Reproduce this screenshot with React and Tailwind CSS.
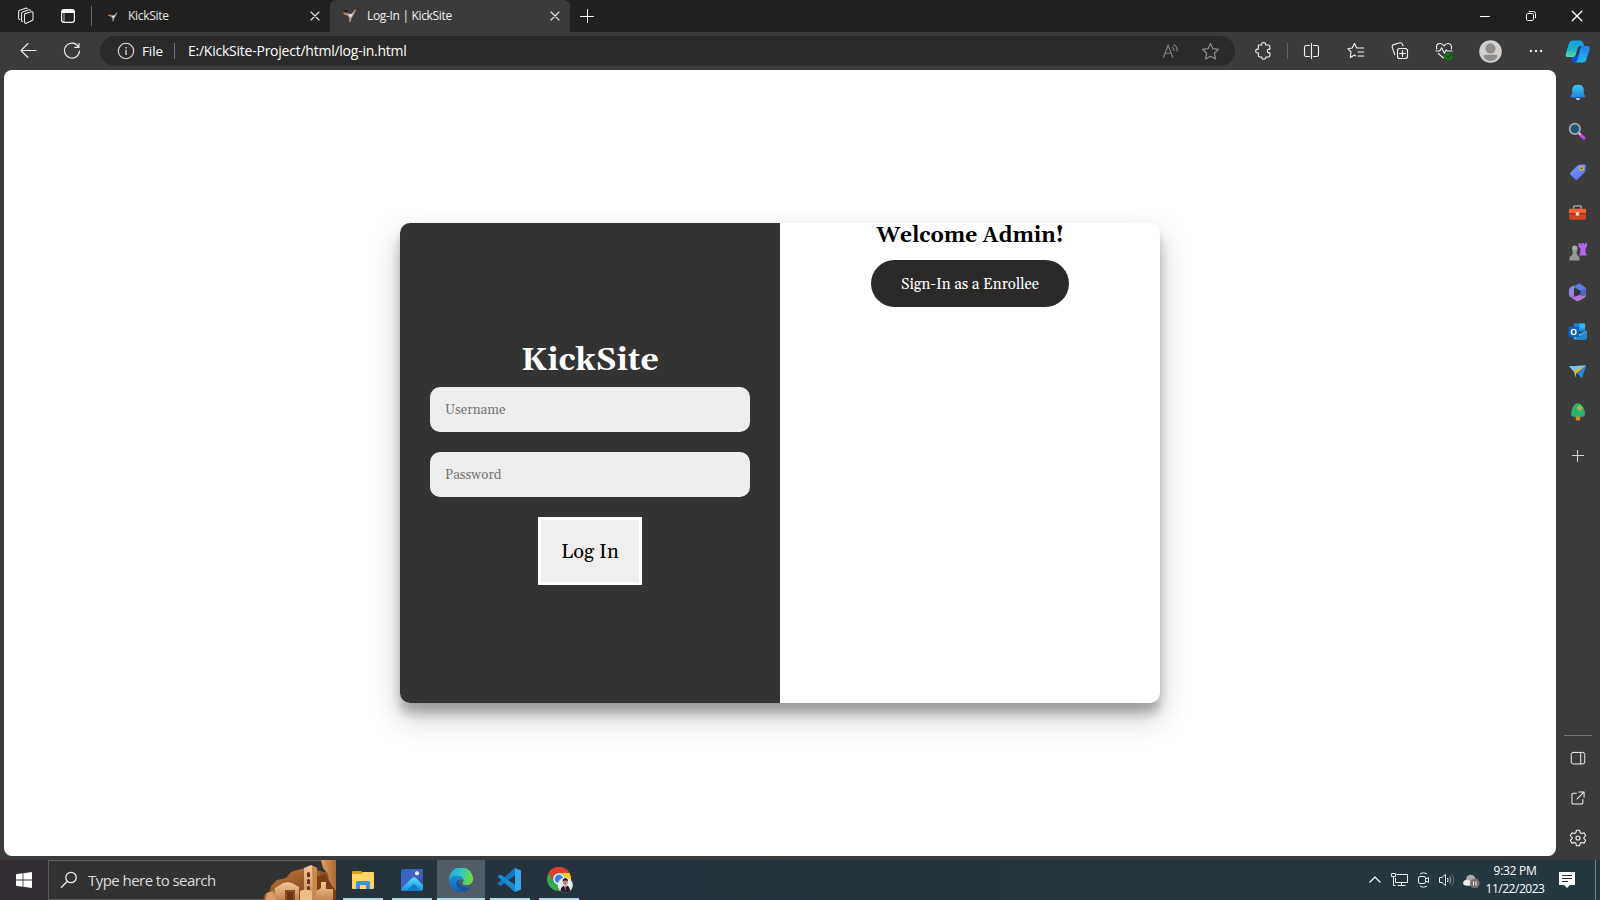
import React from "react";

const UI = "font-['Open_Sans','Noto_Sans',sans-serif]";
const SERIF = "font-['Gelasio','Liberation_Serif',serif]";

/* Outline icon drawn on a 20px grid */
function Line({ children, size = 20, color = "#f3f3f3", w = 1.1, className = "" }) {
  return (
    <svg width={size} height={size} viewBox="0 0 20 20" fill="none" stroke={color} strokeWidth={w} strokeLinecap="round" strokeLinejoin="round" className={"shrink-0 " + className}>
      {children}
    </svg>
  );
}

function Art({ children, size = 20, className = "" }) {
  return (
    <svg width={size} height={size} viewBox="0 0 20 20" className={"shrink-0 " + className}>
      {children}
    </svg>
  );
}

const STAR = "M10 2.4 12.3 7.3 17.6 8 13.7 11.7 14.7 17.1 10 14.5 5.3 17.1 6.3 11.7 2.4 8 7.7 7.3Z";

function Kicker({ size, className }) {
  return (
    <svg width={size} height={size} viewBox="0 0 14 14" className={"shrink-0 " + className}>
      <path d="M.5 4 5 4.6 8 5 12.5.8 13 1.6 9.8 7.2 8.4 9.5 7.6 13H6.4L6.2 9 4.6 6.5 1 5.2Z" fill="#aaa4a2" />
      <path d="M1.4 1.2 4.2 1.6 5.5 4.1 3.2 4.5Z" fill="#171313" />
      <path d="M.4 4.2 3.2 4.5M3.6 3.4 5 5M10.6 2.8 12.8.8M6.4 11 7.2 13" stroke="#d5734a" strokeWidth="1.3" />
      <path d="M5.6 5.6 9.8 5 7.6 8.8Z" fill="#ece9e8" />
    </svg>
  );
}

const Close = ({ color = "#e6e6e6", size = 10 }) => (
  <svg width={size} height={size} viewBox="0 0 10 10" stroke={color} strokeWidth="1.1" strokeLinecap="round">
    <path d="M1 1 9 9M9 1 1 9" />
  </svg>
);

function TitleBar() {
  return (
    <header className="flex h-8 shrink-0 items-center bg-[#202020]">
      <div className="flex w-[52px] justify-center">
        <svg width="18" height="18" viewBox="0 0 18 18" fill="none" stroke="#e8e8e8" strokeWidth="1.1" strokeLinejoin="round" strokeLinecap="round">
          <path d="M8 6.6 14.6 4.8Q16 4.5 16 6V12.2Q16 13.2 15 13.6L9.3 16.2Q8 16.7 7.5 15.4V7.8Q7.5 6.8 8.4 6.6ZM5.6 14.6Q4.5 14.4 4.5 13V6.5Q4.5 5.3 5.6 4.9L12 2.8Q13 2.6 13.4 3.2M2.8 12.6Q1.6 12.2 1.6 11V4.9Q1.6 3.7 2.7 3.3L8.6 1.2Q9.6.9 10.2 1.5" />
        </svg>
      </div>
      <div className="flex w-8 justify-center">
        <svg width="14" height="14" viewBox="0 0 14 14" fill="none" stroke="#f5f5f5">
          <rect x=".6" y=".6" width="12.8" height="12.8" rx="2.3" strokeWidth="1.2" />
          <path d="M1 2.5H13" strokeWidth="3" />
          <path d="M3 4V13" strokeWidth=".9" opacity=".75" />
        </svg>
      </div>
      <div className="ml-[7px] h-5 w-px bg-[#696969]" />
      <div className="flex h-8 w-[238px] items-center pl-[16px] pr-[10px]">
        <Kicker size={10} className="mr-[10px] mt-px" />
        <span className="flex-1 text-[12px] leading-none tracking-[-0.3px] text-[#e8e8e8]">KickSite</span>
        <Close />
      </div>
      <div className="flex h-8 w-[240px] items-center rounded-t-md bg-[#3b3b3b] pl-[13px] pr-[10px]">
        <Kicker size={14} className="mr-[10px]" />
        <span className="flex-1 text-[12px] leading-none tracking-[-0.33px] text-[#f2f2f2]">Log-In | KickSite</span>
        <Close />
      </div>
      <svg width="14" height="14" viewBox="0 0 14 14" className="ml-[10px]" stroke="#f5f5f5" strokeWidth="1"><path d="M7.5 0V14M0 7.5H14" /></svg>
      <div className="ml-auto flex">
        <div className="grid h-8 w-[46px] place-items-center">
          <svg width="10" height="10" viewBox="0 0 10 10" stroke="#fff"><path d="M0 5.5H10" /></svg>
        </div>
        <div className="grid h-8 w-[46px] place-items-center">
          <svg width="10" height="10" viewBox="0 0 10 10" fill="none" stroke="#fff"><rect x=".5" y="2.5" width="7" height="7" rx="1.2" /><path d="M2.7.5H7.4Q9.5.5 9.5 2.6V7.2" /></svg>
        </div>
        <div className="grid h-8 w-[46px] place-items-center"><Close color="#fff" size={12} /></div>
      </div>
    </header>
  );
}

const Tool = ({ children, className = "w-11" }) => <div className={"flex h-9 shrink-0 items-center justify-center " + className}>{children}</div>;

function Toolbar() {
  return (
    <div className="flex h-[38px] shrink-0 items-center bg-[#3b3b3b]">
      <div className="flex w-14 justify-center">
        <svg width="17" height="16" viewBox="0 0 17 16" fill="none" stroke="#ececec" strokeWidth="1.1" strokeLinecap="round" strokeLinejoin="round"><path d="M16 7.5H1M8 .5 1 7.5 8 14.5" /></svg>
      </div>
      <div className="flex w-8 justify-center">
        <svg width="18" height="18" viewBox="0 0 18 18" fill="none" stroke="#ececec" strokeWidth="1.1" strokeLinecap="round" strokeLinejoin="round"><path d="M15.7 5.2A7.5 7.5 0 1 0 16.5 9M16 1.2V5.4H11.8" /></svg>
      </div>
      <div className="ml-3 flex h-[30px] w-[1135px] items-center rounded-full bg-[#2b2b2b] pl-[17px] pr-[14px]">
        <svg width="18" height="18" viewBox="0 0 18 18" fill="none" stroke="#e0e0e0" strokeWidth="1.1"><circle cx="9" cy="9" r="7.7" /><path d="M9 7.8V13" strokeWidth="1.3" /><path d="M9 5V6.4" strokeWidth="1.3" /></svg>
        <span className="ml-[7px] w-[32px] whitespace-nowrap pt-px text-[13.5px] leading-none tracking-[-0.1px] text-white">File</span>
        <div className="h-4 w-px bg-[#747474]" />
        <span className="ml-[13px] flex-1 whitespace-nowrap text-[14px] leading-none tracking-[-0.24px] text-white">E:/KickSite-Project/html/log-in.html</span>
        <svg width="18" height="16" viewBox="0 0 18 16" fill="none" stroke="#858585" strokeWidth="1.1" strokeLinecap="round" className="mr-[20px]"><path d="M1.5 14.3 6.1 2.2 10.7 14.3M3 10.3H9.2M10.4 4.1Q12.1 5.2 11.9 7.5M12 1.8Q15.5 3.8 15 8" /></svg>
        <Line size={21} color="#929292" w={1.1}><path d={STAR} /></Line>
      </div>
      <Tool className="ml-1.5 w-11">
        <Line size={20}><path d="M4.2 4H7.5Q7.1 1.5 9.4 1.5T11.4 4H14.2Q15.7 4 15.7 5.5V8.2Q13.2 7.9 13.2 10T15.7 11.9V14.5Q15.7 16 14.2 16H11.6Q11.8 18.3 9.6 18.3T7.6 16H5.5Q4.1 16 4.1 14.5V11.9Q1.5 12.2 1.5 10T4.1 8.2Z" transform="translate(1.2 0)" /></Line>
      </Tool>
      <div className="ml-0.5 h-4 w-px bg-[#626262]" />
      <Tool className="ml-0.5 w-11">
        <Line size={20}><path d="M7.5 4.5H4.3Q2.5 4.5 2.5 6.3V13.7Q2.5 15.5 4.3 15.5H7.5M11.5 4.5H14.7Q16.5 4.5 16.5 6.3V13.7Q16.5 15.5 14.7 15.5H11.5M9.5 2.5V17.5" /></Line>
      </Tool>
      <Tool><Line size={20}><path d="M13 7H10.7L8.5 2.5 6.2 7 1.8 7.7 5 11 4.3 16.5 8.5 14 9.5 14.8M13 7H17.8M12 11H17.8M12 15H17.8M8.5 2.5 10.7 7" /></Line></Tool>
      <Tool><Line size={20}><rect x="7.5" y="7.5" width="10" height="10" rx="2.3" /><path d="M12.5 9.5V15.5M9.5 12.5H15.5M4.8 13.7 2.3 6.6Q1.6 4.4 3.8 3.6L9.7 1.8Q11.6 1.3 12.4 3.2L13 4.8" /></Line></Tool>
      <Tool>
        <Line size={20}><path d="M2.7 8Q1.5 3 5.6 2.5 8.2 2.2 10 4.8 12 2.2 14.5 2.5 18.5 3.2 17.3 8M2 10H5.8L7.6 6.8 10.4 12.2 12.3 8.8 13.3 10H18M4.3 12.5 9.5 17" /><circle cx="14.5" cy="15.4" r="3.2" fill="#107c10" stroke="#107c10" /><path d="M12.9 15.5 14.1 16.6 16.2 14.2" stroke="#064c06" /></Line>
      </Tool>
      <Tool className="w-12">
        <svg width="23" height="23" viewBox="0 0 23 23"><circle cx="11.5" cy="11.5" r="11.3" fill="#d2d0ce" /><circle cx="11.5" cy="8.6" r="5" fill="#8f8c8a" /><path d="M4.5 16.5Q4.5 14.8 6.2 14.8H16.8Q18.5 14.8 18.5 16.5 16 21 11.5 21T4.5 16.5Z" fill="#8f8c8a" /></svg>
      </Tool>
      <Tool><svg width="14" height="4" viewBox="0 0 14 4" fill="#f0f0f0"><circle cx="1.9" cy="2" r="1.2" /><circle cx="7" cy="2" r="1.2" /><circle cx="12.1" cy="2" r="1.2" /></svg></Tool>
      <Tool className="w-[42px] pr-[3px]">
        <svg width="25" height="23" viewBox="0 0 25 23">
          <defs>
            <linearGradient id="cp1" x1="0" y1="0" x2="0" y2="1"><stop stopColor="#169fe0" /><stop offset=".55" stopColor="#1eb5cb" /><stop offset="1" stopColor="#59dc94" /></linearGradient>
            <linearGradient id="cp2" x1="0" y1="0" x2="0" y2="1"><stop stopColor="#2280e8" /><stop offset="1" stopColor="#20baf4" /></linearGradient>
          </defs>
          <path d="M5.5 16H11L14 10 16 5.5H19L13 22.5H9.5Q7 22 6.5 19Z" fill="#174cda" />
          <path d="M7.7.5H15Q18 .5 18.4 4L19 6H15.7Q13.4 6 12.6 9L10.8 15Q10.2 17 7.8 17H2.5Q0 17 .8 14L4 3.2Q5 .5 7.7.5Z" fill="url(#cp1)" />
          <path d="M16.8 6H22Q25.2 6 24.6 9L21.4 19.5Q20.6 22.5 17.5 22.5H9.8Q12 22.3 12.8 19.2L15.3 9Q15.8 6.2 18 6Z" fill="url(#cp2)" />
          <path d="M13 7.4 16 6 12.6 16 10.4 16.5Z" fill="#303a49" />
        </svg>
      </Tool>
    </div>
  );
}

const SIDE_ICONS = [
  <Art key="bell" size={18}><path d="M3.5 8Q3.5 2 10 2T16.5 8V12L18 14.5Q18.3 16 17 16H3Q1.7 16 2 14.5L3.5 12Z" fill="url(#bell)" /><path d="M7.5 17H12.5Q12 19.2 10 19.2T7.5 17Z" fill="#d4d4d4" /></Art>,
  <Art key="search" size={18} className="-mt-0.5 mr-px"><path d="M13.5 14 17.5 17.7" stroke="#c04be8" strokeWidth="3.6" strokeLinecap="round" /><path d="M11.5 11.5 14 14" stroke="#ddd" strokeWidth="2" /><circle cx="7.6" cy="7.6" r="5.8" fill="#1f5776" stroke="#aaa8a5" strokeWidth="2" /></Art>,
  <Art key="tag" size={18}><path d="M10 2.3 16.5 1.5Q18.8 1.5 18.7 4L18 10 9.5 18.4Q8.3 19.4 7 18.3L1.7 13Q.6 11.8 1.8 10.5Z" fill="url(#tag)" /><circle cx="14" cy="6" r="2" fill="#38457a" stroke="#f2c319" strokeWidth="1.5" /></Art>,
  <Art key="toolbox" size={19}><path d="M6 6V4.2Q6 3 7.2 3H12.8Q14 3 14 4.2V6" fill="none" stroke="#aaa" strokeWidth="1.5" /><path d="M1 7.4Q1 6 2.5 6H17.5Q19 6 19 7.4V11H1Z" fill="#f06437" /><path d="M1.3 11H18.7V16Q18.7 17.5 17.2 17.5H2.8Q1.3 17.5 1.3 16Z" fill="#d44420" /><path d="M1 11.2H19" stroke="#8e2812" /><circle cx="10" cy="11.5" r="2" fill="#ddd" /></Art>,
  <Art key="chess" size={20}><path d="M10.5 1H12.4V2.6H13.7V1H15.8V2.6H17.2V1H19V5L17.5 6V10.5L19 13.6H10.8L12.3 10.5V6L10.5 5Z" fill="#b764f4" /><circle cx="6.8" cy="6.3" r="2.7" fill="#aaa" /><path d="M4.2 8.5H9.4V10H8.5Q8.7 13.3 11.5 15V18.5H1.5V15Q4.8 13.3 5 10H4.2Z" fill="#969696" /></Art>,
  <Art key="m365" size={19}><path d="M10 1Q12 0 14 1.6L18 4.5Q19 5.3 19 7V12L12.4 7.8 8.5 5.5Q7 5 5.2 6.5Z" fill="#557fe8" /><path d="M9.6 1.1Q6 3 6.3 7V13.5L3.4 15.2Q1 14.4 1 12V7.5Q1 5.3 3 4.2Z" fill="#9187dc" /><path d="M3.4 15.2 12.8 10.4 19 8.3V12.3Q19 14.5 17 15.7L11.7 18.8Q9.8 19.7 8 18.5Z" fill="#b974d8" /><path d="M13.2 7.8 19 5.8V13L13.2 14Z" fill="#4b66c3" /><path d="M6.8 6.2 13.2 7.8V12L6.8 14.5Z" fill="#38343c" /></Art>,
  <Art key="outlook" size={19} className="-mt-px"><path d="M6 1.5H17Q18 1.5 18 2.5V10H6Z" fill="#1689d8" /><path d="M12 1.5H18V7H12Z" fill="#35b4ed" /><path d="M6 9 12.5 13 19.5 9V17Q19.5 18.5 18 18.5H7.5Q6 18.5 6 17Z" fill="#55c8f2" /><path d="M6.2 18.2 19.5 10V17Q19.5 18.5 18 18.5Z" fill="#1e83d2" /><rect x=".5" y="5" width="11" height="11" rx="1.3" fill="#0b64bc" /><ellipse cx="6" cy="10.5" rx="2.4" ry="2.7" fill="none" stroke="#fff" strokeWidth="1.5" /></Art>,
  <Art key="plane" size={19} className="-mt-px"><path d="M1 4.5 19 3.7 14.5 16.8 9.4 11.4Z" fill="#3198ed" /><path d="M1 4.5 19 3.7 6 10Z" fill="#73c7f6" /><path d="M6 9.3 19 3.7 8.6 12 8.2 16.5Z" fill="#eeb529" /><path d="M9.4 11.4 19 3.7 14.5 16.8Z" fill="#2784df" /></Art>,
  <Art key="tree" size={20}><path d="M7.7 13H12.2V17.3Q12.2 18.4 11 18.4H9Q7.7 18.4 7.7 17.3Z" fill="#e58a23" /><path d="M10 1.3Q15 1.3 16.5 8.8 18 14 14.8 14.7H5.2Q2 14 3.5 8.8 5 1.3 10 1.3Z" fill="#29b46c" /><path d="M11.6 2.9 12.8 5 14.8 6 12.8 7 11.6 9.1 10.4 7 8.4 6 10.4 5Z" fill="#f7c634" /><circle cx="11.6" cy="6" r=".9" fill="#c66f14" /></Art>,
];

function SideBar() {
  return (
    <aside className="flex w-11 shrink-0 flex-col items-center bg-[#3b3b3b] pt-[2px]">
      <svg width="0" height="0" className="absolute">
        <defs>
          <linearGradient id="bell" x1="0" y1="0" x2="0" y2="1"><stop stopColor="#3cc6f0" /><stop offset="1" stopColor="#1b84e0" /></linearGradient>
          <linearGradient id="tag" x1="0" y1="0" x2="1" y2="1"><stop stopColor="#72a8fb" /><stop offset="1" stopColor="#5c62ee" /></linearGradient>
        </defs>
      </svg>
      {SIDE_ICONS.map((icon, i) => (
        <div key={i} className="flex h-10 w-11 items-center justify-center pr-px">{icon}</div>
      ))}
      <div className="mt-1 flex h-10 items-center">
        <svg width="12" height="12" viewBox="0 0 12 12" stroke="#d8d8d8"><path d="M5.5 0V12M0 5.5H12" /></svg>
      </div>
      <div className="mt-auto h-px w-7 bg-[#757575]" />
      <div className="mt-[2px] flex h-10 items-center"><Line size={18}><rect x="2.5" y="3.8" width="15" height="12.8" rx="2.2" /><path d="M13 4V16.5" /></Line></div>
      <div className="flex h-10 items-center"><Line size={16} w={1.3}><path d="M8 4H4.5Q2.4 4 2.4 6.1V15.5Q2.4 17.6 4.5 17.6H14Q16.1 17.6 16.1 15.5V12M11 2.4H17.6V9M17.4 2.6 8.7 11.3" /></Line></div>
      <div className="mb-[2px] flex h-10 items-center"><Line size={18} w={1.2}><circle cx="10" cy="10" r="2.3" /><path d="M8.3 1.4H11.7L12.4 4.1 14.1 5.1 16.8 4.3 18.6 7.4 16.6 9.2V10.8L18.6 12.6 16.8 15.7 14.1 14.9 12.4 15.9 11.7 18.6H8.3L7.6 15.9 5.9 14.9 3.2 15.7 1.4 12.6 3.4 10.8V9.2L1.4 7.4 3.2 4.3 5.9 5.1 7.6 4.1Z" /></Line></div>
    </aside>
  );
}

function LoginCard() {
  return (
    <main className={"flex h-[480px] w-[760px] overflow-hidden rounded-[10px] bg-white shadow-[0_14px_28px_rgba(0,0,0,0.25),0_10px_10px_rgba(0,0,0,0.22)] " + SERIF}>
      <form className="flex w-[380px] flex-col items-center bg-[#333333] px-[30px] pt-[119px]">
        <h1 className="h-[45px] whitespace-nowrap text-[32px] font-bold leading-[38px] text-white">KickSite</h1>
        <input placeholder="Username" className="h-[45px] w-80 rounded-[10px] bg-[#eeeeee] px-[15px] pt-[2px] text-[13.333px] placeholder:text-[#757575]" />
        <input placeholder="Password" className="mt-5 h-[45px] w-80 rounded-[10px] bg-[#eeeeee] px-[15px] pt-[2px] text-[13.333px] placeholder:text-[#757575]" />
        <button type="button" className="mt-5 h-[68px] w-[104px] whitespace-nowrap border-3 border-white bg-[#efefef] pt-px text-[20px] text-black">Log In</button>
      </form>
      <section className="flex w-[380px] flex-col items-center">
        <h2 className="h-[37px] whitespace-nowrap pt-px text-[21px] font-bold leading-[24px] text-black">Welcome Admin!</h2>
        <button type="button" className="h-[47px] w-[198px] whitespace-nowrap rounded-full bg-[#2c2a29] pt-[4px] text-[15px] text-white">Sign-In as a Enrollee</button>
      </section>
    </main>
  );
}

const AppSlot = ({ children, active }) => (
  <div className={"flex h-10 w-12 flex-col items-center " + (active ? "bg-[#505c66]" : "")}>
    <div className="flex h-[38px] items-center pt-[2px]">{children}</div>
    <div className={"h-[2px] bg-[#a6dcf8] " + (active ? "w-12" : "w-10")} />
  </div>
);

function SearchArt() {
  return (
    <svg width="73" height="40" viewBox="0 0 73 40" className="shrink-0">
      <defs>
        <linearGradient id="rock" x1="0" y1="0" x2="1" y2="1"><stop stopColor="#c5803f" /><stop offset="1" stopColor="#6b2f10" /></linearGradient>
        <linearGradient id="sand" x1="0" y1="0" x2="0" y2="1"><stop stopColor="#f3c998" /><stop offset="1" stopColor="#c58350" /></linearGradient>
        <linearGradient id="cliff" x1="0" y1="0" x2="1" y2="0"><stop stopColor="#e0a263" /><stop offset="1" stopColor="#ad682e" /></linearGradient>
      </defs>
      <path d="M0 40 2 34 7 31 8 26 14 20 23 18 28 12 38 9 46 7 60 12 73 13V40Z" fill="url(#rock)" />
      <path d="M58 0H73V31L66 23 65 14 60 8Z" fill="url(#cliff)" />
      <path d="M52 18 62 14 68 24 73 32V40H52Z" fill="#7c3d16" />
      <path d="M41 8 48 5 54 8V40H41Z" fill="url(#sand)" />
      <path d="M49 6 54 8V40H50Z" fill="#c9894e" />
      <path d="M44 13Q45.5 11 47 13V17H44ZM44 20Q45.5 18 47 20V24H44ZM44 27Q45.5 25 47 27V30H44Z" fill="#6f3415" />
      <path d="M12 28 17 25Q22 21 29 23L36 27V40H11Z" fill="url(#sand)" />
      <path d="M22 30H32V40H22Z" fill="#8b4b20" /><path d="M24 32H30V40H24Z" fill="#6d3514" />
      <path d="M37 31Q43 28 49 31V40H37Z" fill="#efbd88" />
      <path d="M58 22H63V29H70V40H53V31L58 28Z" fill="url(#sand)" />
      <path d="M2 40 4 33 10 31 13 40Z" fill="#d99a63" />
    </svg>
  );
}

function TaskBar() {
  return (
    <footer className="flex h-10 shrink-0 bg-gradient-to-r from-[#342e34] from-0% via-[#24333d] via-25% to-[#25373f]">
      <div className="grid w-12 place-items-center">
        <svg width="16" height="16" viewBox="0 0 16 16" fill="#fff"><path d="M0 2.2 6.6 1.3V7.5H0ZM7.4 1.2 16 0V7.5H7.4ZM0 8.4H6.6V14.7L0 13.8ZM7.4 8.4H16V16L7.4 14.8Z" /></svg>
      </div>
      <div className="flex w-72 items-center border border-r-0 border-[#5d5d5d] bg-[#323232] pl-[11px]">
        <svg width="18" height="18" viewBox="0 0 18 18" fill="none" stroke="#eee" strokeWidth="1.3"><circle cx="11" cy="6.5" r="5.2" /><path d="M7.3 10.2 1 16.8" /></svg>
        <span className="ml-[10px] flex-1 whitespace-nowrap text-[15px] leading-none tracking-[-0.55px] text-[#dcdcdc]">Type here to search</span>
        <SearchArt />
      </div>
      <div className="ml-[3px] flex gap-px">
        <AppSlot>
          <svg width="22" height="19" viewBox="0 0 22 19"><path d="M0 1Q0 0 1 0H9L11 2V4H0Z" fill="#e3a008" /><path d="M0 3H9L11 1H21Q22 1 22 2V17Q22 18 21 18H1Q0 18 0 17Z" fill="#ffd768" /><path d="M4 11.5Q4 10 5.5 10H16.5Q18 10 18 11.5V18H14V14H8V18H4Z" fill="#3a92d8" /></svg>
        </AppSlot>
        <AppSlot>
          <svg width="22" height="22" viewBox="0 0 22 22">
            <defs><linearGradient id="ph" x1="0" y1="0" x2="1" y2="1"><stop stopColor="#216ac1" /><stop offset=".5" stopColor="#4d5fc4" /><stop offset="1" stopColor="#164ca1" /></linearGradient><linearGradient id="mt" x1="0" y1="0" x2="0" y2="1"><stop stopColor="#5ce0ff" /><stop offset="1" stopColor="#168bd9" /></linearGradient></defs>
            <rect width="22" height="22" rx="2" fill="url(#ph)" /><path d="M0 20 11 9Q13 7.5 15 9L22 16V20Q22 22 20 22H2Q0 22 0 20Z" fill="url(#mt)" /><path d="M5 22 12 15.5Q13 14.7 14 15.5L20 22Z" fill="#1379c8" /><circle cx="16" cy="4.3" r="2" fill="#fff" />
          </svg>
        </AppSlot>
        <AppSlot active>
          <svg width="24" height="24" viewBox="0 0 24 24">
            <defs><linearGradient id="eg" x1="0" y1="0" x2="1" y2=".25"><stop stopColor="#249fd9" /><stop offset=".55" stopColor="#34c6c3" /><stop offset="1" stopColor="#64dc4a" /></linearGradient><linearGradient id="eb" x1="0" y1="0" x2="0" y2="1"><stop stopColor="#1b91d8" /><stop offset="1" stopColor="#165bb8" /></linearGradient></defs>
            <path d="M0 11.5A12 12 0 0 1 24 11C24 15 21 17 17.5 17 14 17 13 15.7 14 14.4 15.5 12.5 14.3 8.5 9.5 8.5 4.5 8.5.5 11 0 14Z" fill="url(#eg)" />
            <path d="M0 12.8C.2 9.5 4 7.5 8.5 7.7 13 8 14.5 10.5 14.2 12.5 11 10.5 8.2 13.5 9 17.5 10 22 15 24 18.5 22.3A12 12 0 0 1 0 12.8Z" fill="url(#eb)" />
            <path d="M9 11.8C6.5 14 7 20 12.5 22.5 16 24 21 22 22.7 18.5 20.5 19.8 16.5 20.2 13 18 9.5 16 9 13.5 10.5 11.3Z" fill="#15549f" />
          </svg>
        </AppSlot>
        <AppSlot>
          <svg width="24" height="24" viewBox="0 0 24 24" className="mr-0.5"><path d="M17 .5 18.5 0V7L3.5 18 .5 15.5Z" fill="#1278bf" /><path d="M.5 8.5 3.5 6.5 18.5 17V24L17 23.5Z" fill="#198bd2" /><path d="M18 0 24 2.5V21.5L18 24Z" fill="#32a9f2" /></svg>
        </AppSlot>
        <AppSlot>
          <svg width="26" height="26" viewBox="0 0 26 26" className="ml-0.5">
            <circle cx="12" cy="12" r="12" fill="#34a853" /><path d="M1.6 6A12 12 0 0 1 22.4 6H12A6 6 0 0 0 6.8 15Z" fill="#e33b2e" /><path d="M22.4 6A12 12 0 0 1 12 24L17.2 15A6 6 0 0 0 12 6Z" fill="#fbc71a" /><circle cx="12" cy="12" r="5.7" fill="#fff" /><circle cx="12" cy="12" r="4.4" fill="#397fe8" />
            <circle cx="18.3" cy="18" r="7.6" fill="#e9e9e9" /><path d="M13.5 23.8Q14 18.8 18.3 18.5T23.2 23.7Q18.3 27.5 13.5 23.8Z" fill="#1b1e30" /><path d="M16.8 18.5H19.8L18.4 22Z" fill="#fff" /><path d="M18.3 19V24" stroke="#b33" /><ellipse cx="18.3" cy="15.3" rx="2.3" ry="3" fill="#bd8771" /><path d="M15.7 15Q15.2 11.4 18.3 11.2T20.9 15L20 13.6H16.7Z" fill="#171313" />
          </svg>
        </AppSlot>
      </div>
      <div className="ml-auto flex items-center">
        <div className="flex w-6 justify-center"><svg width="12" height="8" viewBox="0 0 12 8" fill="none" stroke="#fff" strokeWidth="1.2"><path d="M.5 6.5 6 1 11.5 6.5" /></svg></div>
        <div className="flex w-6 justify-center"><svg width="17" height="14" viewBox="0 0 17 14" fill="none" stroke="#eee"><path d="M5.5 1.5H16.5V9.5H4.5V5M10.5 9.5V12.5M6.5 12.5H14.5M.5 1.5V.5H4.5V3.5H.5ZM2.5 4V12.5H4.5" /></svg></div>
        <div className="flex w-6 justify-center pl-px"><svg width="12" height="16" viewBox="0 0 12 16" fill="none" stroke="#eee"><rect x=".5" y="4.5" width="7" height="7" rx="1.5" /><path d="M7.5 7 10.5 5.5V10.5L7.5 9M2 1.8Q5.5-.4 9 1.8M2 14.2Q5.5 16.4 9 14.2" /></svg></div>
        <div className="flex w-6 justify-center"><svg width="17" height="14" viewBox="0 0 17 14" fill="none" stroke="#eee"><path d="M.5 4.5H3L6.5 1.3V12.7L3 9.5H.5Z" /><path d="M8.5 5Q9.7 7 8.5 9" /><path d="M10.7 3.3Q13 7 10.7 10.7" stroke="#aaa" /><path d="M13 1.5Q16.5 7 13 12.5" stroke="#6f7b80" /></svg></div>
        <div className="flex w-6 justify-center pt-0.5"><svg width="17" height="15" viewBox="0 0 17 15"><path d="M3.5 11.5Q0 11.3.2 8.5.5 6 3 5.7 3.5 1 7.5.8 11.5.8 12.3 4.5 15.5 5 15.5 8L10 11.5Z" fill="#a9abab" /><path d="M0 9Q2 5 5 6L10 8.5V11.5H3.5Q.5 11.5 0 9Z" fill="#ececec" /><circle cx="11.8" cy="9.5" r="4.8" fill="#766f6d" /><path d="M10.5 7.5V11.5M13 7.5V11.5" stroke="#fff" /></svg></div>
        <div className="flex w-[63px] flex-col items-center pl-px text-[12px] leading-[18px] tracking-[-0.48px] text-white">
          <span className="whitespace-nowrap tracking-[-0.3px]">9:32 PM</span>
          <span className="whitespace-nowrap">11/22/2023</span>
        </div>
        <svg width="16" height="16" viewBox="0 0 16 16" className="ml-[13px]"><path d="M0 0H16V13H11L8 16 5 13H0Z" fill="#fff" /><path d="M3 3.5H13M3 6.5H13M3 9.5H9" stroke="#26363f" /></svg>
        <div className="ml-5 mr-1 h-10 w-px bg-[#75818a]" />
      </div>
    </footer>
  );
}

export default function App() {
  return (
    <div className={"flex h-[900px] w-[1600px] flex-col overflow-hidden bg-[#3b3b3b] " + UI}>
      <TitleBar />
      <Toolbar />
      <div className="flex min-h-0 flex-1">
        <div className="mb-1 ml-1 flex flex-1 items-center justify-center overflow-hidden rounded-lg bg-white">
          <LoginCard />
        </div>
        <SideBar />
      </div>
      <TaskBar />
    </div>
  );
}
